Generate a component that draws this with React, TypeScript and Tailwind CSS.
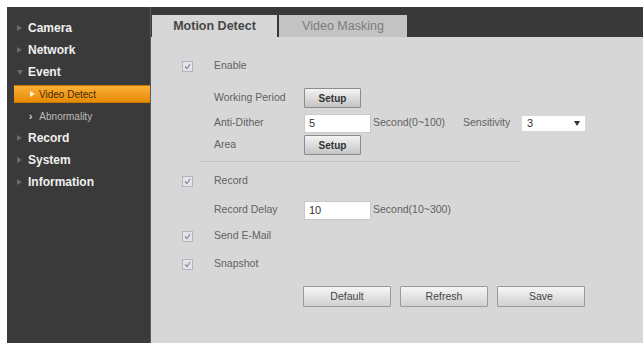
import type { ReactNode } from "react";

const font = { fontFamily: '"Liberation Sans", Arial, sans-serif' };

const Tri = ({ className = "" }: { className?: string }) => (
    <svg width="5" height="6" viewBox="0 0 5 6" className={className}>
        <path d="M0 0 L5 3 L0 6 Z" fill="currentColor" />
    </svg>
);

const TriDown = () => (
    <svg width="6" height="5" viewBox="0 0 6 5">
        <path d="M0 0 L6 0 L3 5 Z" fill="currentColor" />
    </svg>
);

const NavItem = ({ label, open }: { label: string; open?: boolean }) => (
    <div className="h-[22px] flex items-center pl-[10px]">
        <span className="w-[11px] text-[#6a6a6a] flex items-center">{open ? <TriDown /> : <Tri />}</span>
        <span className="text-[12px] font-bold text-[#f0f0f0]">{label}</span>
    </div>
);

const Check = () => (
    <div className="w-[11px] h-[11px] border border-[#b4b4c0] bg-[#e4e4ea] flex items-center justify-center">
        <svg width="7" height="7" viewBox="0 0 7 7">
            <path d="M1 3.5 L3 5.5 L6 1" fill="none" stroke="#8a8a96" strokeWidth="1.2" />
        </svg>
    </div>
);

const Row = ({ className = "", children }: { className?: string; children: ReactNode }) => (
    <div className={"flex items-center " + className}>{children}</div>
);

const SetupBtn = () => (
    <button className="w-[57px] h-[20px] border border-[#8c8c8c] bg-gradient-to-b from-[#f4f4f4] to-[#c4c4c4] text-[10px] font-bold text-[#333] rounded-[1px]">
        Setup
    </button>
);

const BigBtn = ({ label }: { label: string }) => (
    <button className="w-[88px] h-[21px] border border-[#9a9a9a] bg-gradient-to-b from-[#f6f6f6] to-[#d0d0d0] text-[10.5px] text-[#444] rounded-[1px]">
        {label}
    </button>
);

const App = () => {
    return (
        <div className="w-[643px] h-[343px] bg-white pt-[7px] pl-[7px] flex overflow-hidden" style={font}>
            {/* sidebar */}
            <div className="w-[143px] h-full bg-[#3a3a3a] pt-[10px] shrink-0">
                <NavItem label="Camera" />
                <NavItem label="Network" />
                <NavItem label="Event" open />
                <div className="h-[22px] py-[2px] pl-[7px]">
                    <div className="h-[18px] bg-gradient-to-b from-[#fbb032] to-[#e68a00] flex items-center pl-[16px] border-y border-[#c97800]">
                        <Tri className="text-[#fff3d0] mr-[4px]" />
                        <span className="text-[10px] text-[#4a2a00]">Video Detect</span>
                    </div>
                </div>
                <div className="h-[22px] flex items-center pl-[22px]">
                    <span className="text-[10px] text-[#dddddd] mr-[7px] font-bold">›</span>
                    <span className="text-[10px] text-[#bdbdbd]">Abnormality</span>
                </div>
                <NavItem label="Record" />
                <NavItem label="System" />
                <NavItem label="Information" />
            </div>

            {/* main */}
            <div className="flex-1 flex flex-col border-l-[1px] border-[#5a5a5a]">
                <div className="h-[30px] bg-[#393939] flex items-end pl-[1px] shrink-0">
                    <div className="w-[125px] h-[22px] bg-[#d7d7d7] flex items-center justify-center text-[12.5px] font-bold text-[#474747]">
                        Motion Detect
                    </div>
                    <div className="w-[2px]" />
                    <div className="w-[128px] h-[22px] bg-[#c3c3c3] flex items-center justify-center text-[12.5px] text-[#7c7c7c]">
                        Video Masking
                    </div>
                </div>
                <div className="flex-1 bg-[#d7d7d7] text-[10.5px] text-[#626262] pl-[31px] pt-[19px]">
                    <Row className="h-[20px]">
                        <Check />
                        <span className="ml-[21px]">Enable</span>
                    </Row>
                    <Row className="h-[20px] mt-[12px] pl-[32px]">
                        <span className="w-[90px]">Working Period</span>
                        <SetupBtn />
                    </Row>
                    <Row className="h-[20px] mt-[5px] pl-[32px]">
                        <span className="w-[90px]">Anti-Dither</span>
                        <div className="w-[67px] h-[19px] bg-white border border-[#c8c8c8] flex items-center pl-[4px] text-[11px] text-[#333]">5</div>
                        <span className="ml-[2px] w-[90px]">Second(0~100)</span>
                        <span className="w-[59px]">Sensitivity</span>
                        <div className="w-[63px] h-[15px] bg-white flex items-center justify-between px-[5px] text-[11px] text-[#333]">
                            <span>3</span>
                            <TriDown />
                        </div>
                    </Row>
                    <Row className="h-[20px] mt-[2px] pl-[32px]">
                        <span className="w-[90px]">Area</span>
                        <SetupBtn />
                    </Row>
                    <div className="h-[1px] w-[320px] ml-[18px] mt-[6px] bg-[#c2c2c2]" />
                    <Row className="h-[20px] mt-[9px]">
                        <Check />
                        <span className="ml-[21px]">Record</span>
                    </Row>
                    <Row className="h-[20px] mt-[9px] pl-[32px]">
                        <span className="w-[90px]">Record Delay</span>
                        <div className="w-[67px] h-[19px] bg-white border border-[#c8c8c8] flex items-center pl-[4px] text-[11px] text-[#333]">10</div>
                        <span className="ml-[2px]">Second(10~300)</span>
                    </Row>
                    <Row className="h-[20px] mt-[6px]">
                        <Check />
                        <span className="ml-[21px]">Send E-Mail</span>
                    </Row>
                    <Row className="h-[20px] mt-[8px]">
                        <Check />
                        <span className="ml-[21px]">Snapshot</span>
                    </Row>
                    <Row className="h-[21px] mt-[12px] pl-[121px] gap-[9px]">
                        <BigBtn label="Default" />
                        <BigBtn label="Refresh" />
                        <BigBtn label="Save" />
                    </Row>
                </div>
            </div>
        </div>
    );
};

export default App;
